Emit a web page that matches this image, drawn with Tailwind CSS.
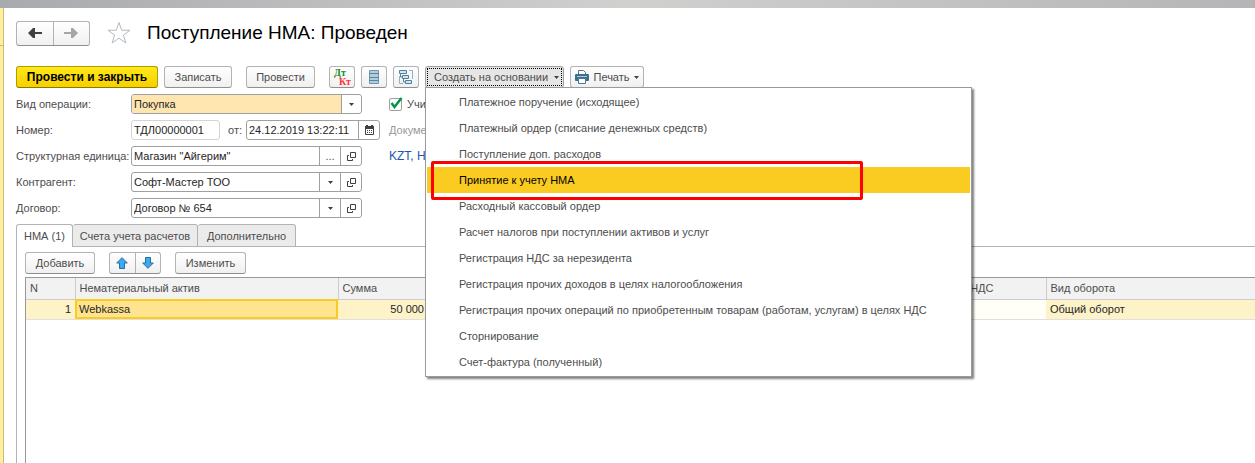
<!DOCTYPE html>
<html lang="ru">
<head>
  <meta charset="UTF-8" />
  <meta name="viewport" content="width=device-width, initial-scale=1" />
  <title>Поступление НМА: Проведен</title>
  <script src="https://cdn.jsdelivr.net/npm/@tailwindcss/browser@4"></script>
</head>
<body class="h-screen flex flex-col overflow-hidden bg-white font-['Liberation_Sans',Arial,sans-serif] text-[11px] leading-4 text-[#4d4d4d]">
  <!-- Window edge -->
  <div class="h-2 shrink-0 bg-linear-to-r from-[#a9aaad] via-[#d0d0cf] to-[#b5b5b7]"></div>

  <div class="flex flex-1 min-h-0">
    <!-- Collapsed side panel -->
    <aside class="w-1 shrink-0 border-r border-[#c9bb79] bg-[#ffef9f]">
      <div class="h-[38px] border-b border-[#c9bb79]"></div>
    </aside>

    <main class="flex flex-1 flex-col min-w-0 pl-3 pt-3">
      <!-- Header -->
      <header class="flex items-center h-[26px]">
        <div class="flex h-[25px] w-[74px] rounded-[3px] border border-[#b3b3b3] border-b-[#8f8f8f] bg-linear-to-b from-white to-[#f0f0f0]">
          <button type="button" aria-label="Назад" class="flex flex-1 items-center justify-center border-r border-[#b3b3b3]">
            <svg class="w-4 h-3" viewBox="0 0 16 12" fill="#404040"><path d="M1 6L6 1H8V5H15V7H8V11H6z" /></svg>
          </button>
          <button type="button" aria-label="Вперед" class="flex flex-1 items-center justify-center">
            <svg class="w-4 h-3" viewBox="0 0 16 12" fill="#a6a6a6"><path d="M15 6L10 1H8V5H1V7H8V11H10z" /></svg>
          </button>
        </div>
        <button type="button" aria-label="В избранное" class="ml-[17px]">
          <svg class="w-6 h-6" viewBox="0 0 24 24" fill="#fff" stroke="#b3b9c0" stroke-width="1"><path d="M12 1.500L14.700 9.200H23L16.400 14.100L18.900 22L12 17.200L5.100 22L7.600 14.100L1 9.200H9.300Z" /></svg>
        </button>
        <h1 class="ml-4 text-[19px] leading-6 text-black">Поступление НМА: Проведен</h1>
      </header>

      <!-- Command bar -->
      <div class="mt-5 flex h-[22px]">
        <button type="button" class="w-[142px] rounded-[3px] border border-[#b39b00] border-b-[#8c7900] bg-linear-to-b from-[#ffe817] to-[#f7d000] text-[12px] font-bold text-black">Провести и закрыть</button>
        <button type="button" class="ml-1.5 w-[68px] rounded-[3px] border border-[#b3b3b3] border-b-[#8f8f8f] bg-linear-to-b from-white to-[#f0f0f0]">Записать</button>
        <button type="button" class="ml-3.5 w-[69px] rounded-[3px] border border-[#b3b3b3] border-b-[#8f8f8f] bg-linear-to-b from-white to-[#f0f0f0]">Провести</button>
        <button type="button" aria-label="Проводки" class="ml-3.5 w-[26px] rounded-[3px] border border-[#b3b3b3] border-b-[#8f8f8f] bg-linear-to-b from-white to-[#f0f0f0]">
          <svg class="w-6 h-5" viewBox="0 0 24 20" font-family="Liberation Serif, serif" font-size="10" font-weight="bold">
            <text x="4" y="9" fill="#1c8a1c">Дт</text>
            <text x="9" y="18" fill="#ff3333">Кт</text>
          </svg>
        </button>
        <button type="button" aria-label="Движения" class="ml-1.5 flex w-[26px] items-center justify-center rounded-[3px] border border-[#b3b3b3] border-b-[#8f8f8f] bg-linear-to-b from-white to-[#f0f0f0]">
          <svg class="w-3 h-4" viewBox="0 0 12 16"><path fill="#b4cddb" stroke="#6f96ad" d="M1.500 1.500h9v13h-9z" /><path stroke="#5586a3" d="M1 4.500h10M1 8.500h10M1 11.500h10" /></svg>
        </button>
        <button type="button" aria-label="Структура подчиненности" class="ml-1.5 flex w-[26px] items-center justify-center rounded-[3px] border border-[#b3b3b3] border-b-[#8f8f8f] bg-linear-to-b from-white to-[#f0f0f0]">
          <svg class="w-4 h-4" viewBox="0 0 16 16" fill="none" stroke="#4f819f"><path fill="#d5e5ee" d="M1.500 1.500h7v3h-7zM4.500 6.500h6v3h-6zM7.500 11.500h6v3h-6z" /><path d="M2.500 5v3H4M5.500 10v3H7" /><path stroke="#8fb2c6" d="M11 1.500h3.500V10M1.500 7v7.500H5" /></svg>
        </button>

        <div class="relative ml-1.5">
          <button type="button" aria-haspopup="menu" aria-expanded="true" class="h-[22px] w-[139px] rounded-[3px] border border-[#a0a0a0] bg-[#e6e6e6] p-px">
            <span class="flex h-full items-center justify-between border border-dotted border-black pl-[6px] pr-0.5">
              <span class="whitespace-nowrap">Создать на основании</span>
              <svg class="w-[5px] h-[3px]" viewBox="0 0 5 3" fill="#404040"><path d="M0 0h5L2.500 3z" /></svg>
            </span>
          </button>
          <!-- Drop-down menu -->
          <ul role="menu" class="absolute left-0 top-[21px] z-10 w-[547px] border border-[#9a9a9a] bg-white p-px shadow-[2px_2px_2px_#00000080]">
            <li><button type="button" role="menuitem" class="flex h-[26px] w-full items-center pl-8">Платежное поручение (исходящее)</button></li>
            <li><button type="button" role="menuitem" class="flex h-[26px] w-full items-center pl-8">Платежный ордер (списание денежных средств)</button></li>
            <li><button type="button" role="menuitem" class="flex h-[26px] w-full items-center pl-8">Поступление доп. расходов</button></li>
            <li class="relative">
              <button type="button" role="menuitem" class="flex h-[26px] w-full items-center bg-[#facb20] pl-8 text-black">Принятие к учету НМА</button>
              <span class="pointer-events-none absolute -top-1.5 left-1 h-[39px] w-[432px] rounded-[2px] border-3 border-[#ff0000]"></span>
            </li>
            <li><button type="button" role="menuitem" class="flex h-[26px] w-full items-center pl-8">Расходный кассовый ордер</button></li>
            <li><button type="button" role="menuitem" class="flex h-[26px] w-full items-center pl-8">Расчет налогов при поступлении активов и услуг</button></li>
            <li><button type="button" role="menuitem" class="flex h-[26px] w-full items-center pl-8">Регистрация НДС за нерезидента</button></li>
            <li><button type="button" role="menuitem" class="flex h-[26px] w-full items-center pl-8">Регистрация прочих доходов в целях налогообложения</button></li>
            <li><button type="button" role="menuitem" class="flex h-[26px] w-full items-center pl-8">Регистрация прочих операций по приобретенным товарам (работам, услугам) в целях НДС</button></li>
            <li><button type="button" role="menuitem" class="flex h-[26px] w-full items-center pl-8">Сторнирование</button></li>
            <li><button type="button" role="menuitem" class="flex h-[26px] w-full items-center pl-8">Счет-фактура (полученный)</button></li>
          </ul>
        </div>

        <button type="button" class="ml-1.5 flex w-[74px] items-center justify-between rounded-[3px] border border-[#b3b3b3] border-b-[#8f8f8f] bg-linear-to-b from-white to-[#f0f0f0] px-1">
          <svg class="w-3.5 h-3.5" viewBox="0 0 14 14"><path fill="#fff" stroke="#4a7894" d="M3.500 5V.5h5l2 2V5" /><rect y="4" width="14" height="7" rx="1" fill="#3d708f" /><path stroke="#a9c9dc" d="M2 6.500h10" /><path fill="#fff" stroke="#4a7894" d="M3.500 8.500h7v5h-7z" /></svg>
          <span>Печать</span>
          <svg class="w-[5px] h-[3px]" viewBox="0 0 5 3" fill="#404040"><path d="M0 0h5L2.500 3z" /></svg>
        </button>
      </div>

      <!-- Document fields -->
      <div class="mt-1.5 flex">
        <div class="flex w-[373px] flex-col gap-1.5">
          <div class="flex h-5 items-center">
            <label for="operation" class="w-[115px] whitespace-nowrap">Вид операции:</label>
            <div class="flex h-5 w-[231px] overflow-hidden rounded-[3px] border border-[#a0a0a0]">
              <select id="operation" class="min-w-0 flex-1 appearance-none bg-[#ffe5b0] pl-0.5 text-[#262626]">
                <option>Покупка</option>
              </select>
              <span class="flex w-5 items-center justify-center border-l border-[#a0a0a0]"><svg class="w-[5px] h-[3px]" viewBox="0 0 5 3" fill="#404040"><path d="M0 0h5L2.500 3z" /></svg></span>
            </div>
          </div>
          <div class="flex h-5 items-center">
            <label for="number" class="w-[115px]">Номер:</label>
            <input id="number" type="text" value="ТДЛ00000001" class="h-5 w-[89px] rounded-[3px] border border-[#d4d4d4] pl-0.5 text-[#262626]" />
            <label for="date" class="w-[26px] pl-2">от:</label>
            <div class="flex h-5 w-[134px] rounded-[3px] border border-[#a0a0a0]">
              <input id="date" type="text" value="24.12.2019 13:22:11" class="min-w-0 flex-1 pl-0.5 text-[#262626]" />
              <button type="button" aria-label="Календарь" class="flex w-[21px] items-center justify-center border-l border-[#a0a0a0]">
                <svg class="w-[9px] h-[10px]" viewBox="0 0 9 10"><path fill="#fff" stroke="#404040" d="M.5 1.500h8v8h-8z" /><path fill="#404040" d="M0 1h9v3H0zM1 0h2v1H1zM6 0h2v1H6zM2 5h1v1H2zM4 5h1v1H4zM6 5h1v1H6zM2 7h1v1H2zM4 7h1v1H4zM6 7h1v1H6z" /></svg>
              </button>
            </div>
          </div>
          <div class="flex h-5 items-center">
            <label for="unit" class="w-[115px] whitespace-nowrap">Структурная единица:</label>
            <div class="flex h-5 w-[231px] rounded-[3px] border border-[#a0a0a0]">
              <input id="unit" type="text" value="Магазин &quot;Айгерим&quot;" class="min-w-0 flex-1 pl-0.5 text-[#262626]" />
              <button type="button" aria-label="Выбрать" class="w-[21px] border-l border-[#a0a0a0]">...</button>
              <button type="button" aria-label="Открыть" class="flex w-[21px] items-center justify-center border-l border-[#a0a0a0]"><svg class="w-[9px] h-[9px]" viewBox="0 0 9 9" fill="none" stroke="#404040"><path d="M3.500.5h5v5h-5zM2 3.500H.5v5h5V7" /></svg></button>
            </div>
          </div>
          <div class="flex h-5 items-center">
            <label for="partner" class="w-[115px]">Контрагент:</label>
            <div class="flex h-5 w-[231px] rounded-[3px] border border-[#a0a0a0]">
              <input id="partner" type="text" value="Софт-Мастер ТОО" class="min-w-0 flex-1 pl-0.5 text-[#262626]" />
              <button type="button" aria-label="Список" class="flex w-[21px] items-center justify-center border-l border-[#a0a0a0]"><svg class="w-[5px] h-[3px]" viewBox="0 0 5 3" fill="#404040"><path d="M0 0h5L2.500 3z" /></svg></button>
              <button type="button" aria-label="Открыть" class="flex w-[21px] items-center justify-center border-l border-[#a0a0a0]"><svg class="w-[9px] h-[9px]" viewBox="0 0 9 9" fill="none" stroke="#404040"><path d="M3.500.5h5v5h-5zM2 3.500H.5v5h5V7" /></svg></button>
            </div>
          </div>
          <div class="flex h-5 items-center">
            <label for="contract" class="w-[115px]">Договор:</label>
            <div class="flex h-5 w-[231px] rounded-[3px] border border-[#a0a0a0]">
              <input id="contract" type="text" value="Договор № 654" class="min-w-0 flex-1 pl-0.5 text-[#262626]" />
              <button type="button" aria-label="Список" class="flex w-[21px] items-center justify-center border-l border-[#a0a0a0]"><svg class="w-[5px] h-[3px]" viewBox="0 0 5 3" fill="#404040"><path d="M0 0h5L2.500 3z" /></svg></button>
              <button type="button" aria-label="Открыть" class="flex w-[21px] items-center justify-center border-l border-[#a0a0a0]"><svg class="w-[9px] h-[9px]" viewBox="0 0 9 9" fill="none" stroke="#404040"><path d="M3.500.5h5v5h-5zM2 3.500H.5v5h5V7" /></svg></button>
            </div>
          </div>
        </div>

        <div class="flex flex-col gap-1.5">
          <div class="flex h-5 items-center">
            <div class="relative h-[13px] w-[13px]">
              <input id="account" type="checkbox" checked class="block h-[13px] w-[13px] appearance-none rounded-[2px] border border-[#a0a0a0]" />
              <svg class="pointer-events-none absolute -top-0.5 left-0 w-[14px] h-[14px]" viewBox="0 0 14 14" fill="none" stroke="#009646" stroke-width="2.500"><path d="M2.500 7L5.500 11L12.500 2" /></svg>
            </div>
            <label for="account" class="pl-[5px]">Учи</label>
          </div>
          <div class="flex h-5 items-center text-[#999]">Докуме</div>
          <a href="#" class="flex h-5 items-center text-[12px] text-[#1a56ae]">KZT, Н</a>
        </div>
      </div>

      <!-- Tabs -->
      <div class="mt-1.5 flex h-[23px] shrink-0" role="tablist">
        <button type="button" role="tab" aria-selected="true" class="w-[57px] rounded-t-[3px] border border-b-0 border-[#b3b3b3]">НМА (1)</button>
        <button type="button" role="tab" class="w-[125px] whitespace-nowrap rounded-t-[3px] border border-l-0 border-[#b3b3b3] bg-[#ebebeb]">Счета учета расчетов</button>
        <button type="button" role="tab" class="w-[98px] rounded-t-[3px] border border-l-0 border-[#b3b3b3] bg-[#ebebeb]">Дополнительно</button>
        <div class="flex-1 border-b border-[#b3b3b3]"></div>
      </div>

      <section class="flex min-h-0 flex-1 flex-col border-l border-[#b3b3b3] pl-2 pt-[5px]">
        <div class="flex h-[22px] shrink-0">
          <button type="button" class="w-[70px] rounded-[3px] border border-[#b3b3b3] border-b-[#8f8f8f] bg-linear-to-b from-white to-[#f0f0f0]">Добавить</button>
          <div class="ml-3.5 flex w-[52px] rounded-[3px] border border-[#b3b3b3] border-b-[#8f8f8f] bg-linear-to-b from-white to-[#f0f0f0]">
            <button type="button" aria-label="Вверх" class="flex flex-1 items-center justify-center border-r border-[#b3b3b3]"><svg class="w-3 h-3" viewBox="0 0 12 12" fill="#3fa9f0" stroke="#24709f"><path d="M6 .7L11.300 6H8.500v5.500h-5V6H.7z" /></svg></button>
            <button type="button" aria-label="Вниз" class="flex flex-1 items-center justify-center"><svg class="w-3 h-3" viewBox="0 0 12 12" fill="#3fa9f0" stroke="#24709f"><path d="M6 11.300L11.300 6H8.500V.5h-5V6H.7z" /></svg></button>
          </div>
          <button type="button" class="ml-3.5 w-[71px] rounded-[3px] border border-[#b3b3b3] border-b-[#8f8f8f] bg-linear-to-b from-white to-[#f0f0f0]">Изменить</button>
        </div>

        <div class="mt-[3px] flex-1 border-l border-t border-[#999]">
          <table class="w-full table-fixed border-collapse">
            <colgroup>
              <col class="w-[49px]" />
              <col class="w-[263px]" />
              <col class="w-[110px]" />
              <col class="w-[456px]" />
              <col class="w-[142px]" />
              <col />
            </colgroup>
            <thead>
              <tr class="h-[21px] border-b border-[#ccc] bg-[#f2f2f2] text-left">
                <th class="border-r border-[#ccc] pl-1 font-normal">N</th>
                <th class="border-r border-[#ccc] pl-1 font-normal">Нематериальный актив</th>
                <th class="border-r border-[#ccc] pl-1 font-normal">Сумма</th>
                <th class="border-r border-[#ccc]"></th>
                <th class="border-r border-[#ccc] pr-[52px] text-right font-normal">НДС</th>
                <th class="pl-1 font-normal">Вид оборота</th>
              </tr>
            </thead>
            <tbody>
              <tr class="h-5 border-b border-[#e0e0e0] bg-[#fdf2c8] text-[#262626]">
                <td class="pr-1 text-right">1</td>
                <td class="bg-[#ffe48f] pl-1 outline-2 -outline-offset-2 outline-[#facb20]">Webkassa</td>
                <td class="pr-6 text-right">50 000</td>
                <td></td>
                <td class="bg-[#fffff8]"></td>
                <td class="pl-1">Общий оборот</td>
              </tr>
            </tbody>
          </table>
        </div>
      </section>
    </main>
  </div>
</body>
</html>
